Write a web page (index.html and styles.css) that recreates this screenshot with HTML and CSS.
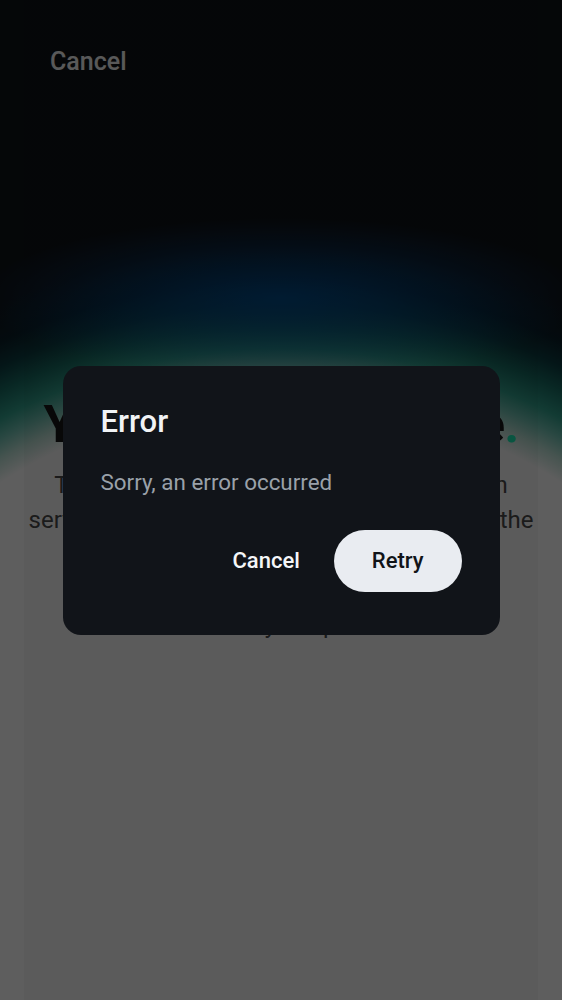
FILE: index.html
```html
<!DOCTYPE html>
<html lang="en">
<head>
<meta charset="utf-8">
<title>Error</title>
<link rel="stylesheet" href="styles.css">
</head>
<body>
<div class="page">
  <header class="topbar">
    <button class="link-btn" type="button">Cancel</button>
  </header>
  <main class="content">
    <h1 class="hero-title">Your personal space<span class="dot">.</span></h1>
    <p class="lead">Tap Retry to upload your videos to our own<br>servers, where they remain fully private until the<br>download link you share with a friend<br>or family member is opened and the file<br>is ready to open.</p>
  </main>
</div>
<div class="overlay">
  <div class="dialog" role="alertdialog" aria-labelledby="dlg-title">
    <h2 class="dialog-title" id="dlg-title">Error</h2>
    <p class="dialog-text">Sorry, an error occurred</p>
    <div class="dialog-actions">
      <button class="btn btn-text" type="button">Cancel</button>
      <button class="btn btn-filled" type="button">Retry</button>
    </div>
  </div>
</div>
</body>
</html>
```
FILE: styles.css
```css
html, body {
  margin: 0;
  padding: 0;
}

body {
  font-family: Roboto, "Noto Sans", "Liberation Sans", sans-serif;
  background: #ffffff;
}

.page {
  min-height: 1000px;
  background:
    linear-gradient(to right, transparent 24px, rgba(0, 0, 0, 0.03) 24px, rgba(0, 0, 0, 0.03) calc(100% - 24px), transparent calc(100% - 24px)),
    radial-gradient(ellipse 300px 80px at 50% 298px, rgba(3, 80, 152, 0.85), rgba(3, 80, 152, 0) 100%),
    radial-gradient(ellipse 647px 565px at 50% 812px,
      #ffffff 0%,
      #ffffff 72.6%,
      #bee3d8 76%,
      #72c3b4 79%,
      #32a08c 82%,
      #196e64 86%,
      #0c3c41 90%,
      #0a1e28 94%,
      #101318 100%);
  background-color: #101318;
}

.topbar {
  padding: 47px 0 0 50px;
}

.link-btn {
  font-family: inherit;
  font-size: 25px;
  line-height: 30px;
  font-weight: 500;
  color: #f2f2f2;
  background: none;
  border: 0;
  padding: 0;
  cursor: pointer;
}

.content {
  padding-top: 318px;
  text-align: center;
}

.hero-title {
  margin: 0;
  font-size: 52px;
  line-height: 60px;
  font-weight: 700;
  letter-spacing: -0.8px;
  color: #161616;
}

.dot {
  color: #19e6b0;
}

.lead {
  margin: 13px 0 0;
  font-size: 24px;
  line-height: 35px;
  color: #4a4a4a;
  white-space: nowrap;
}

.overlay {
  position: fixed;
  inset: 0;
  background: rgba(0, 0, 0, 0.63);
  display: flex;
  align-items: center;
  justify-content: center;
}

.dialog {
  width: 437px;
  box-sizing: border-box;
  padding: 38px 38px 43px;
  background: #111419;
  border-radius: 18px;
}

.dialog-title {
  margin: 0;
  font-size: 31px;
  line-height: 36px;
  font-weight: 500;
  color: #f1f3f5;
}

.dialog-text {
  margin: 27px 0 0;
  font-size: 22.4px;
  line-height: 30px;
  color: #9aa1a9;
}

.dialog-actions {
  margin-top: 33px;
  display: flex;
  justify-content: flex-end;
  align-items: center;
  gap: 18px;
}

.btn {
  font-family: inherit;
  font-size: 22px;
  font-weight: 500;
  height: 62px;
  border: 0;
  border-radius: 31px;
  cursor: pointer;
}

.btn-text {
  background: transparent;
  color: #f5f6f8;
  padding: 0 16px;
}

.btn-filled {
  background: #e9ecf1;
  color: #111418;
  padding: 0 38px;
}
```
